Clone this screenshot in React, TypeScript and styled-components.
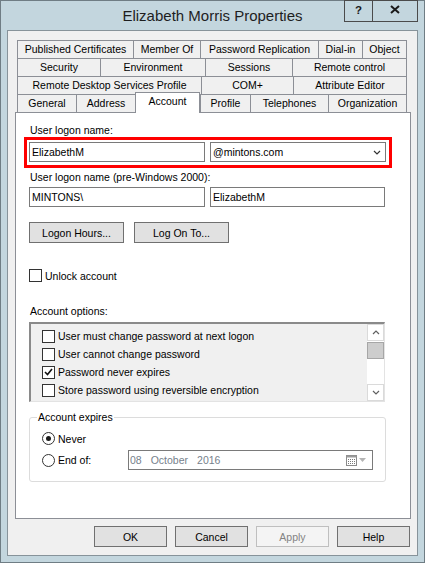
import styled, { createGlobalStyle, css } from "styled-components";

const GlobalStyle = createGlobalStyle`
  html, body {
    margin: 0;
    padding: 0;
    background: #fff;
  }
  body {
    font-family: "Liberation Sans", Arial, sans-serif;
    font-size: 10.5px;
    color: #000;
  }
  * {
    box-sizing: border-box;
  }
`;

const Frame = styled.div`
  width: 425px;
  height: 563px;
  border: 1px solid #6f7d84;
  background: #c3d6de;
  padding: 0 6px 6px;
  display: flex;
  flex-direction: column;
`;
const TitleBar = styled.div`
  height: 29px;
  flex: none;
  display: grid;
  grid-template-columns: 1fr auto 1fr;
  align-items: center;
`;
const Title = styled.div`
  grid-column: 2;
  font-size: 15px;
  color: #1e1e1e;
  white-space: nowrap;
`;
const CaptionButtons = styled.div`
  grid-column: 3;
  justify-self: end;
  align-self: start;
  margin-top: -1px;
  display: flex;
`;
const CaptionButton = styled.div<{ $w: number; $first?: boolean }>`
  width: ${(p) => p.$w}px;
  height: 22px;
  border: 1px solid #4b4b4b;
  border-left: ${(p) => (p.$first ? "1px solid #4b4b4b" : "none")};
  display: flex;
  align-items: center;
  justify-content: center;
  font-weight: bold;
  font-size: 11.5px;
  color: #1a1a1a;
  padding-bottom: 3px;
`;
const Client = styled.div`
  flex: 1;
  border: 1px solid #87939a;
  background: #f0f0f0;
  padding: 9px 6px 0 7px;
  display: flex;
  flex-direction: column;
`;
const TabStrip = styled.div`
  padding: 0 4px 0 2px;
  display: flex;
  flex-direction: column;
`;
const TabRow = styled.div`
  display: flex;
  height: 18px;
`;
const Tab = styled.div<{ $w: number; $active?: boolean }>`
  width: ${(p) => p.$w}px;
  flex: none;
  border-top: 1px solid #8c8f96;
  border-left: 1px solid #8c8f96;
  background: #f0f0f0;
  text-align: center;
  line-height: 17px;
  white-space: nowrap;
  &:last-child {
    border-right: 1px solid #8c8f96;
  }
  ${(p) =>
    p.$active &&
    css`
      background: #fff;
      border-right: 1px solid #8c8f96;
      height: 21px;
      align-self: flex-start;
      margin-top: -2px;
      margin-bottom: -1px;
      position: relative;
      z-index: 1;
    `}
`;
const Panel = styled.div`
  height: 407px;
  flex: none;
  border: 1px solid #8c8f96;
  background: #fff;
  padding: 0 0 0 13px;
  display: flex;
  flex-direction: column;
`;
const Label = styled.div<{ $top: number }>`
  margin-top: ${(p) => p.$top}px;
  height: 13px;
  line-height: 13px;
  padding-left: 1px;
  white-space: nowrap;
`;
const Highlight = styled.div`
  margin-left: -5px;
  width: 368px;
  border: 3px solid #ff0000;
  padding: 2px 3px 3px 2px;
  display: flex;
  gap: 5px;
`;
const FieldRow = styled.div<{ $top?: number }>`
  margin-top: ${(p) => p.$top ?? 0}px;
  display: flex;
  gap: 5px;
`;
const TextBox = styled.div<{ $w?: number }>`
  width: ${(p) => p.$w ?? 176}px;
  height: 20px;
  border: 1px solid #7a7a7a;
  background: #fff;
  padding: 0 4px 0 2px;
  display: flex;
  align-items: center;
  justify-content: space-between;
  white-space: nowrap;
`;
const ButtonRow = styled.div<{ $top?: number }>`
  margin-top: ${(p) => p.$top ?? 0}px;
  display: flex;
  gap: ${(p) => (p.$top ? 10 : 8)}px;
`;
const Button = styled.div<{ $w: number; $disabled?: boolean }>`
  width: ${(p) => p.$w}px;
  height: 21px;
  border: 1px solid ${(p) => (p.$disabled ? "#bfbfbf" : "#707070")};
  background: ${(p) => (p.$disabled ? "#f4f4f4" : "#e1e1e1")};
  color: ${(p) => (p.$disabled ? "#838383" : "#000")};
  display: flex;
  align-items: center;
  justify-content: center;
  white-space: nowrap;
`;
const CheckRow = styled.div<{ $top?: number; $h?: number }>`
  margin-top: ${(p) => p.$top ?? 0}px;
  height: ${(p) => p.$h ?? 13}px;
  display: flex;
  align-items: center;
  gap: 3px;
  white-space: nowrap;
`;
const Box = styled.div`
  width: 13px;
  height: 13px;
  flex: none;
  border: 1px solid #333;
  background: #fff;
  display: flex;
  align-items: center;
  justify-content: center;
`;
const ListBox = styled.div`
  margin-top: 4px;
  width: 356px;
  height: 80px;
  border-style: solid;
  border-width: 2px 1px 1px 2px;
  border-color: #8a8a8a #e3e3e3 #e3e3e3 #8a8a8a;
  background: #f0f0f0;
  display: flex;
`;
const ListItems = styled.div`
  flex: 1;
  padding: 3px 0 0 11px;
  display: flex;
  flex-direction: column;
`;
const ListItem = styled(CheckRow)`
  height: 18px;
`;
const ScrollBar = styled.div`
  width: 17px;
  flex: none;
  background: #fff;
  display: flex;
  flex-direction: column;
`;
const ScrollArrow = styled.div`
  height: 17px;
  border: 1px solid #dadada;
  display: flex;
  align-items: center;
  justify-content: center;
`;
const ScrollThumb = styled.div`
  height: 17px;
  margin-top: 1px;
  border: 1px solid #a6a6a6;
  background: #cdcdcd;
`;
const ScrollTrack = styled.div`
  flex: 1;
`;
const GroupBox = styled.fieldset`
  margin: 9px 0 0;
  width: 357px;
  border: 1px solid #dcdcdc;
  border-radius: 3px;
  padding: 0 0 11px 7px;
  min-width: 0;
`;
const Legend = styled.legend`
  padding: 0 1px;
  line-height: 13px;
`;
const RadioRow = styled.div<{ $top: number; $h?: number }>`
  margin: ${(p) => p.$top}px 0 0 5px;
  height: ${(p) => p.$h ?? 13}px;
  display: flex;
  align-items: center;
  white-space: nowrap;
`;
const RadioLabel = styled.div<{ $w?: number }>`
  display: flex;
  align-items: center;
  gap: 3px;
  width: ${(p) => (p.$w ? `${p.$w}px` : "auto")};
`;
const Radio = styled.div<{ $on?: boolean }>`
  width: 13px;
  height: 13px;
  border-radius: 50%;
  border: 1px solid #333;
  background: #fff;
  display: flex;
  align-items: center;
  justify-content: center;
  &::after {
    content: "";
    width: 5px;
    height: 5px;
    border-radius: 50%;
    background: ${(p) => (p.$on ? "#1a1a1a" : "transparent")};
  }
`;
const DatePicker = styled.div`
  width: 245px;
  height: 20px;
  border: 1px solid #7a7a7a;
  background: #fff;
  padding: 0 6px 0 1px;
  display: flex;
  align-items: center;
  gap: 9px;
  color: #76818c;
`;
const DateIcons = styled.div`
  margin-left: auto;
  display: flex;
  align-items: center;
  gap: 2px;
`;
const Footer = styled.div`
  margin-top: 7px;
  padding-right: 1px;
  display: flex;
  justify-content: flex-end;
  gap: 8px;
`;

const tabRows: [string, number][][] = [
  [
    ["Published Certificates", 116],
    ["Member Of", 67],
    ["Password Replication", 118],
    ["Dial-in", 44],
    ["Object", 45],
  ],
  [
    ["Security", 83],
    ["Environment", 105],
    ["Sessions", 87],
    ["Remote control", 115],
  ],
  [
    ["Remote Desktop Services Profile", 184],
    ["COM+", 92],
    ["Attribute Editor", 114],
  ],
  [
    ["General", 59],
    ["Address", 59],
    ["Account", 65],
    ["Profile", 50],
    ["Telephones", 78],
    ["Organization", 79],
  ],
];

const accountOptions = [
  { text: "User must change password at next logon", checked: false },
  { text: "User cannot change password", checked: false },
  { text: "Password never expires", checked: true },
  { text: "Store password using reversible encryption", checked: false },
];

function Check() {
  return (
    <svg width="9" height="8" viewBox="0 0 9 8">
      <path d="M1 4 L3.5 6.5 L8 1" fill="none" stroke="#111" strokeWidth="1.6" />
    </svg>
  );
}

function Chevron({ up, color = "#333" }: { up?: boolean; color?: string }) {
  return (
    <svg width="8" height="5" viewBox="0 0 8 5">
      <path
        d={up ? "M1 4 L4 1 L7 4" : "M1 1 L4 4 L7 1"}
        fill="none"
        stroke={color}
        strokeWidth="1.2"
      />
    </svg>
  );
}

function CalendarIcon() {
  return (
    <svg width="11" height="11" viewBox="0 0 11 11">
      <rect x="0.5" y="0.5" width="10" height="10" fill="#fff" stroke="#8a8a8a" />
      <rect x="0.5" y="0.5" width="10" height="2" fill="#9a9a9a" />
      {[3, 5, 7].map((y) =>
        [2, 4, 6, 8].map((x) => (
          <rect key={`${x}-${y}`} x={x} y={y + 1} width="1" height="1" fill="#7a7a7a" />
        ))
      )}
    </svg>
  );
}

function App() {
  return (
    <>
      <GlobalStyle />
      <Frame>
        <TitleBar>
          <Title>Elizabeth Morris Properties</Title>
          <CaptionButtons>
            <CaptionButton $w={29} $first>
              ?
            </CaptionButton>
            <CaptionButton $w={45}>
              <svg width="10" height="9" viewBox="0 0 10 9">
                <path d="M1 1 L9 8 M9 1 L1 8" stroke="#1a1a1a" strokeWidth="2" />
              </svg>
            </CaptionButton>
          </CaptionButtons>
        </TitleBar>
        <Client>
          <TabStrip>
            {tabRows.map((row, i) => (
              <TabRow key={i}>
                {row.map(([name, w]) => (
                  <Tab key={name} $w={w} $active={name === "Account"}>
                    {name}
                  </Tab>
                ))}
              </TabRow>
            ))}
          </TabStrip>
          <Panel>
            <Label $top={11}>User logon name:</Label>
            <Highlight>
              <TextBox>ElizabethM</TextBox>
              <TextBox>
                @mintons.com
                <Chevron />
              </TextBox>
            </Highlight>
            <Label $top={3}>User logon name (pre-Windows 2000):</Label>
            <FieldRow $top={3}>
              <TextBox>MINTONS\</TextBox>
              <TextBox $w={175}>ElizabethM</TextBox>
            </FieldRow>
            <ButtonRow $top={15}>
              <Button $w={95}>Logon Hours...</Button>
              <Button $w={95}>Log On To...</Button>
            </ButtonRow>
            <CheckRow $top={26}>
              <Box />
              Unlock account
            </CheckRow>
            <Label $top={23}>Account options:</Label>
            <ListBox>
              <ListItems>
                {accountOptions.map((o) => (
                  <ListItem key={o.text}>
                    <Box>{o.checked && <Check />}</Box>
                    {o.text}
                  </ListItem>
                ))}
              </ListItems>
              <ScrollBar>
                <ScrollArrow>
                  <Chevron up color="#606060" />
                </ScrollArrow>
                <ScrollThumb />
                <ScrollTrack />
                <ScrollArrow>
                  <Chevron color="#606060" />
                </ScrollArrow>
              </ScrollBar>
            </ListBox>
            <GroupBox>
              <Legend>Account expires</Legend>
              <RadioRow $top={8}>
                <RadioLabel>
                  <Radio $on />
                  Never
                </RadioLabel>
              </RadioRow>
              <RadioRow $top={5} $h={20}>
                <RadioLabel $w={86}>
                  <Radio />
                  End of:
                </RadioLabel>
                <DatePicker>
                  <span>08</span>
                  <span>October</span>
                  <span>2016</span>
                  <DateIcons>
                    <CalendarIcon />
                    <svg width="7" height="4" viewBox="0 0 7 4">
                      <path d="M0 0 L7 0 L3.5 4 Z" fill="#b4b4b4" />
                    </svg>
                  </DateIcons>
                </DatePicker>
              </RadioRow>
            </GroupBox>
          </Panel>
          <Footer>
            <Button $w={73}>OK</Button>
            <Button $w={73}>Cancel</Button>
            <Button $w={73} $disabled>
              Apply
            </Button>
            <Button $w={73}>Help</Button>
          </Footer>
        </Client>
      </Frame>
    </>
  );
}

export default App;
